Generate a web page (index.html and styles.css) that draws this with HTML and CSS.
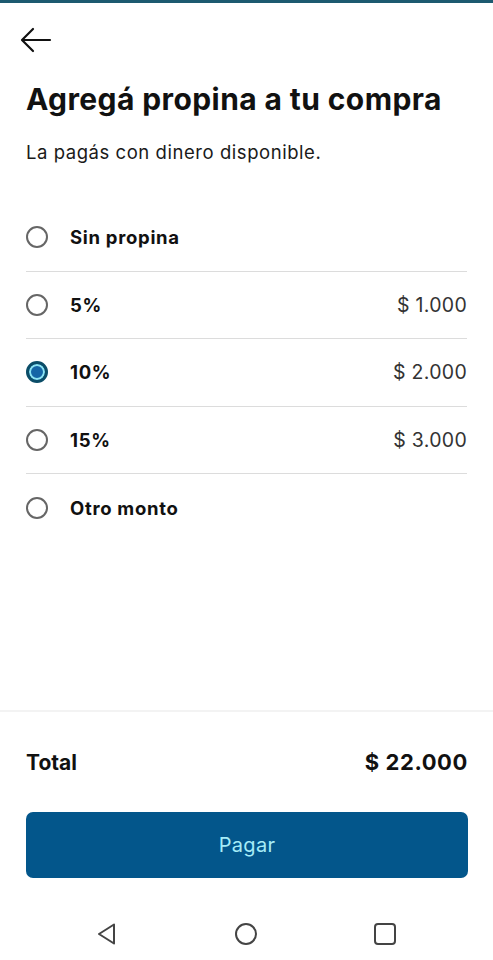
FILE: index.html
```html
<!DOCTYPE html>
<html lang="es">
<head>
<meta charset="utf-8">
<link rel="stylesheet" href="styles.css">
</head>
<body>
<div class="screen">
  <div class="topline"></div>
  <header class="header">
    <svg class="back" width="32" height="26" viewBox="0 0 32 26"><path d="M30 13H3M13 2L2 13l11 11" fill="none" stroke="#111" stroke-width="2.2" stroke-linecap="round" stroke-linejoin="round"/></svg>
  </header>
  <h1 class="title">Agregá propina a tu compra</h1>
  <p class="subtitle">La pagás con dinero disponible.</p>
  <ul class="options">
    <li class="option"><span class="radio"></span><span class="label">Sin propina</span></li>
    <li class="option"><span class="radio"></span><span class="label">5%</span><span class="amount">$ 1.000</span></li>
    <li class="option"><span class="radio radio-on"></span><span class="label">10%</span><span class="amount">$ 2.000</span></li>
    <li class="option"><span class="radio"></span><span class="label">15%</span><span class="amount">$ 3.000</span></li>
    <li class="option"><span class="radio"></span><span class="label">Otro monto</span></li>
  </ul>
  <div class="spacer"></div>
  <footer class="footer">
    <div class="total"><span>Total</span><span class="total-amount">$ 22.000</span></div>
    <button class="pay">Pagar</button>
  </footer>
  <nav class="navbar">
    <svg width="22" height="24" viewBox="0 0 22 24"><path d="M18 2.5L3 12l15 9.5z" fill="none" stroke="#444" stroke-width="2" stroke-linejoin="round"/></svg>
    <svg width="24" height="24" viewBox="0 0 24 24"><circle cx="12" cy="12" r="10" fill="none" stroke="#444" stroke-width="2"/></svg>
    <svg width="24" height="24" viewBox="0 0 24 24"><rect x="2" y="2" width="20" height="20" rx="3" fill="none" stroke="#444" stroke-width="2"/></svg>
  </nav>
</div>
</body>
</html>
```

FILE: styles.css
```css
* { box-sizing: border-box; }
html, body { margin: 0; padding: 0; background: #fff; }
body { font-family: "Inter", "Open Sans", sans-serif; color: #111; }
.screen { width: 493px; height: 960px; display: flex; flex-direction: column; }
.topline { height: 3px; background: #1d5a70; }
.header { height: 73px; padding: 24px 0 0 20px; }
.back { display: block; }
.title { margin: 4px 0 0 26px; font-size: 30px; font-weight: 700; letter-spacing: 0.4px; line-height: 38px; color: #111; }
.subtitle { margin: 22px 0 0 26px; font-size: 18.5px; letter-spacing: 0.55px; line-height: 24px; color: #1a1a1a; }
.options { list-style: none; margin: 40px 26px 0 26px; padding: 0; }
.option { display: flex; align-items: center; height: 67.5px; border-bottom: 1.5px solid #dcdcdc; }
.option:last-child { border-bottom: none; }
.radio { width: 22px; height: 22px; border-radius: 50%; border: 2.5px solid #666; flex-shrink: 0; }
.radio-on { border: 3px solid #0b4d68; background: #1565a6; box-shadow: inset 0 0 0 2px #8de4f2; }
.label { margin-left: 22px; font-size: 18.5px; font-weight: 700; letter-spacing: 0.7px; color: #111; flex: 1; }
.amount { font-size: 19.5px; letter-spacing: 0.3px; color: #333; }
.spacer { flex: 1; border-bottom: 2px solid #f3f3f3; }
.footer { padding: 0 25px 0 26px; }
.total { display: flex; justify-content: space-between; align-items: center; height: 100px; font-size: 21px; font-weight: 700; color: #111; }
.total-amount { font-size: 22px; letter-spacing: 0.6px; }
.pay { display: block; width: 100%; height: 66px; border: none; border-radius: 7px; background: #03568b; color: #a6ecf7; font-family: inherit; font-size: 20px; letter-spacing: 0.3px; }
.navbar { height: 82px; display: flex; justify-content: space-between; align-items: center; padding: 30px 96px 0 96px; }
```
